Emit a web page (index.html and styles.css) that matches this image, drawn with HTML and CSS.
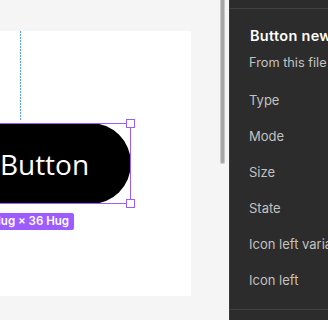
FILE: index.html
```html
<!DOCTYPE html>
<html lang="en">
<head>
    <meta charset="UTF-8">
    <meta name="viewport" content="width=device-width, initial-scale=1.0">
    <title>Button new</title>
    <link rel="stylesheet" href="styles.css">
</head>
<body>
    <div class="workspace">
        <div class="canvas">
            <div class="frame">
                <div class="guide"></div>
                <div class="selection">
                    <div class="btn">Button</div>
                    <span class="handle handle-tr"></span>
                    <span class="handle handle-br"></span>
                </div>
                <div class="badge-row">
                    <span class="badge">Hug × 36 Hug</span>
                </div>
            </div>
        </div>
        <div class="scrollbar"></div>
    </div>

    <aside class="panel">
        <div class="panel-head"></div>
        <h2 class="title">Button new</h2>
        <p class="source">From this file</p>
        <ul class="props">
            <li>Type</li>
            <li>Mode</li>
            <li>Size</li>
            <li>State</li>
            <li>Icon left variant</li>
            <li>Icon left</li>
        </ul>
        <div class="panel-foot"></div>
    </aside>
</body>
</html>
```

FILE: styles.css
```css
body {
    margin: 0;
    width: 328px;
    height: 320px;
    overflow: hidden;
    display: flex;
    font-family: Inter, "Noto Sans", sans-serif;
    background: #f5f5f5;
}

/* Canvas side */
.workspace {
    flex: 0 0 229px;
    display: flex;
    background: #f5f5f5;
}
.canvas {
    flex: 0 0 220px;
}
.frame {
    position: relative;
    width: 191px;
    height: 265px;
    margin-top: 31px;
    padding-top: 92px;
    box-sizing: border-box;
    background: #fff;
}
.guide {
    position: absolute;
    left: 20px;
    top: 0;
    width: 1px;
    height: 89px;
    background: repeating-linear-gradient(to bottom, #4ea6f2 0 2px, transparent 2px 3px);
}
.selection {
    position: relative;
    width: 168px;
    height: 81px;
    margin-left: -37px;
}
.selection::after {
    content: "";
    position: absolute;
    inset: 0;
    border: 1px solid #9d5cff;
}
.btn {
    height: 100%;
    display: flex;
    align-items: center;
    justify-content: center;
    background: #000;
    color: #fff;
    border-radius: 0 41px 41px 0;
    font-family: "Open Sans", sans-serif;
    font-size: 28px;
    font-weight: 500;
    padding-right: 5px;
    box-sizing: border-box;
}
.handle {
    position: absolute;
    right: -4px;
    width: 7px;
    height: 7px;
    background: #fff;
    border: 1px solid #9d5cff;
    z-index: 1;
}
.handle-tr { top: -4px; }
.handle-br { bottom: -4px; }
.badge-row {
    display: flex;
    justify-content: flex-end;
    width: 74px;
    margin-top: 9px;
}
.badge {
    white-space: nowrap;
    background: #9d5cff;
    color: #fff;
    font-size: 11.5px;
    font-weight: 600;
    line-height: 17px;
    padding: 0 5px;
    border-radius: 2px;
}
.scrollbar {
    flex: 0 0 3px;
    height: 163px;
    background: #a6a6a6;
    border: 1px solid #c8c8c8;
    border-top: none;
    border-radius: 0 0 3px 3px;
}

/* Properties panel */
.panel {
    flex: 1;
    background: #2c2c2c;
    border-left: 1px solid #3a3a3a;
    color: #c2c2c2;
    white-space: nowrap;
    overflow: hidden;
}
.panel-head {
    height: 8px;
    border-bottom: 1px solid #404040;
}
.title {
    margin: 0;
    padding: 17px 0 0 20px;
    font-size: 14.5px;
    font-weight: 600;
    letter-spacing: 0.3px;
    line-height: 20px;
    color: #fff;
}
.source {
    margin: 9px 0 0 19px;
    font-size: 12.75px;
    line-height: 16px;
}
.props {
    list-style: none;
    margin: 11px 0 0;
    padding: 0 0 0 19px;
}
.props li {
    font-size: 13px;
    line-height: 36px;
}
.panel-foot {
    margin-top: 11px;
    border-top: 1px solid #404040;
}
```
